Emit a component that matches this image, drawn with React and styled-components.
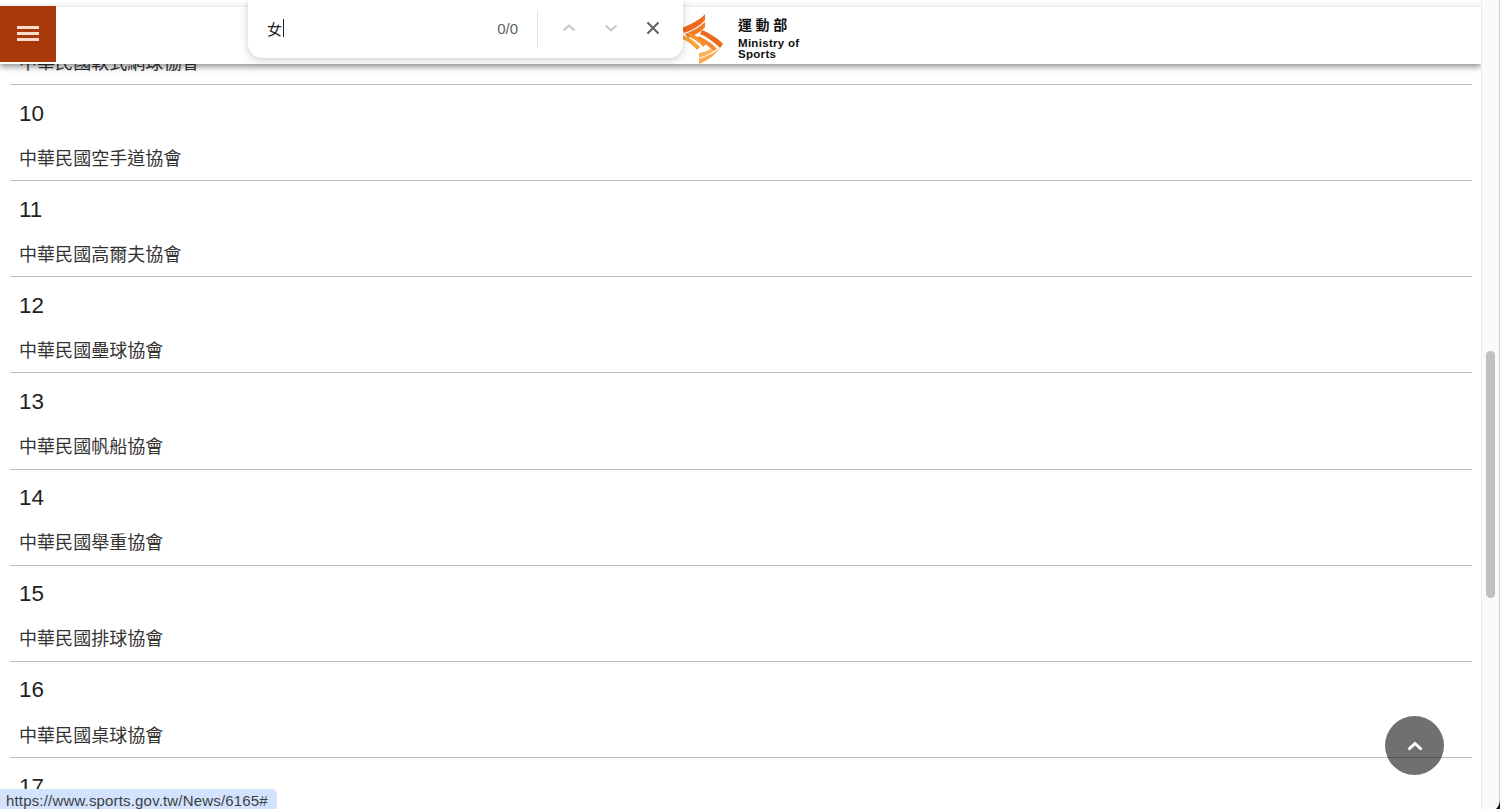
import React from 'react';
import styled, { createGlobalStyle } from 'styled-components';

const GlobalStyle = createGlobalStyle`
  html, body {
    margin: 0;
    height: 100%;
    overflow: hidden;
    background: #fff;
  }
  body {
    font-family: "Liberation Sans", "Noto Sans CJK TC", sans-serif;
  }
`;

const Window = styled.div`
  position: relative;
  display: flex;
  width: 1500px;
  height: 809px;
  overflow: hidden;
  background: #fff;
`;

const Page = styled.main`
  position: relative;
  flex: 1;
  min-width: 0;
  overflow: hidden;
`;

const TopStrip = styled.div`
  position: absolute;
  top: 0;
  left: 0;
  right: 0;
  z-index: 2;
  height: 6px;
  background: #fff;
`;

const Header = styled.header`
  position: absolute;
  top: 6px;
  left: 0;
  right: 0;
  z-index: 2;
  display: flex;
  height: 58px;
  background: #fff;
  border-top: 1px solid #efefef;
  box-sizing: border-box;
  box-shadow: 0 3px 6px rgba(0, 0, 0, 0.42);
`;

const MenuButton = styled.button`
  display: flex;
  flex-direction: column;
  justify-content: center;
  gap: 3px;
  box-sizing: border-box;
  width: 56px;
  height: 56px;
  margin-top: -1px;
  padding: 0 17px 1px;
  border: 0;
  background: #a9380a;
`;

const MenuBar = styled.span`
  display: block;
  height: 3px;
  background: #fbdccb;
`;

const Logo = styled.div`
  display: flex;
  align-items: flex-start;
  gap: 15px;
  margin-left: 626px;
  padding-top: 7px;
`;

const LogoText = styled.div`
  display: flex;
  flex-direction: column;
  color: #111;
`;

const LogoTitle = styled.span`
  font-size: 14px;
  font-weight: 700;
  line-height: 20px;
  letter-spacing: 3.6px;
  margin: 1px 0 2.5px;
`;

const LogoSub = styled.span`
  font-size: 11.5px;
  font-weight: 700;
  line-height: 11.5px;
  letter-spacing: 0.3px;
`;

const List = styled.div`
  display: flex;
  flex-direction: column;
  margin: -11.14px 9px 0 9.5px;
`;

const Row = styled.div`
  box-sizing: border-box;
  flex: none;
  height: 96.14px;
  padding: 15.7px 9.5px 0;
  border-bottom: 1px solid #bcbcbc;
`;

const RowNumber = styled.div`
  font-size: 22.4px;
  line-height: 26px;
  color: #222;
`;

const RowName = styled.div`
  margin-top: 19.1px;
  font-size: 18px;
  line-height: 26px;
  letter-spacing: 0.05px;
  color: #333;
`;

const Scrollbar = styled.div`
  flex: none;
  box-sizing: border-box;
  width: 19px;
  padding: 351px 4px 0 4px;
  background: #fafafa;
  border-left: 1px solid #ebebeb;
  border-right: 1px solid #cfcfcf;
`;

const Thumb = styled.div`
  height: 247px;
  border-radius: 5px;
  background: #c0c0c0;
`;

const FindBar = styled.div`
  position: absolute;
  top: 0;
  left: 248px;
  z-index: 3;
  display: flex;
  align-items: center;
  box-sizing: border-box;
  width: 435px;
  height: 58px;
  padding: 0 9px 2px 19px;
  background: #fff;
  border-radius: 0 0 14px 14px;
  box-shadow: 0 2px 8px rgba(0, 0, 0, 0.2);
`;

const FindInput = styled.div`
  flex: 1;
  display: flex;
  align-items: center;
  font-size: 15px;
  color: #222;
`;

const Caret = styled.span`
  width: 1px;
  height: 18px;
  margin-left: 1px;
  background: #222;
`;

const FindCount = styled.span`
  font-size: 15px;
  color: #5f6368;
`;

const FindDivider = styled.span`
  width: 1px;
  height: 37px;
  margin: 0 10px 0 19px;
  background: #e3e4ea;
`;

const FindAction = styled.span`
  display: flex;
  align-items: center;
  justify-content: center;
  width: 42px;
  height: 42px;
  color: ${props => props.$dim ? '#c4c6c9' : '#5f6368'};
`;

const TopButton = styled.button`
  position: absolute;
  right: 56px;
  bottom: 34px;
  z-index: 3;
  display: flex;
  align-items: center;
  justify-content: center;
  width: 59px;
  height: 59px;
  padding: 0;
  border: 0;
  border-radius: 50%;
  background: rgba(0, 0, 0, 0.56);
`;

const StatusBubble = styled.div`
  position: absolute;
  left: 0;
  bottom: 0;
  z-index: 4;
  box-sizing: border-box;
  width: 277px;
  height: 20px;
  padding-left: 6px;
  border-radius: 0 5px 0 0;
  background: #d3e3fd;
  color: #3c4043;
  font-size: 15px;
  line-height: 23px;
  letter-spacing: 0.17px;
  white-space: nowrap;
`;

const Corner = styled.div`
  position: absolute;
  right: 0;
  bottom: 0;
  z-index: 4;
  width: 4px;
  height: 9px;
  background: #111;
  clip-path: path('M4 0 L4 9 L0 9 Q3.4 6 4 0 Z');
`;

const rows = [
  { id: 9, name: '中華民國軟式網球協會' },
  { id: 10, name: '中華民國空手道協會' },
  { id: 11, name: '中華民國高爾夫協會' },
  { id: 12, name: '中華民國壘球協會' },
  { id: 13, name: '中華民國帆船協會' },
  { id: 14, name: '中華民國舉重協會' },
  { id: 15, name: '中華民國排球協會' },
  { id: 16, name: '中華民國桌球協會' },
  { id: 17 },
];

const Chevron = ({ up }) => (
  <svg width="18" height="18" viewBox="0 0 18 18" fill="none" stroke="currentColor" strokeWidth="2">
    <path d={up ? 'M3.5 11.5 L9 6.5 L14.5 11.5' : 'M3.5 6.5 L9 11.5 L14.5 6.5'} />
  </svg>
);

const LogoMark = () => (
  <svg width="41" height="50" viewBox="0 0 41 50">
    <path d="M23 0 C18 6 9 10 0 14 L2 19 C11 16 19 11 23 6 Z" fill="#ee6a1f" />
    <path d="M23 8 C18 13 11 17 3 20 L6 24 C13 21 20 17 23 13 Z" fill="#f27a25" />
    <path d="M0 21 C6 23 13 27 18 33 L15 36 C11 31 6 27 0 25 Z" fill="#f7a03c" />
    <path d="M5 19 L9 24 C14 26 19 30 21 33 L24 30 C19 25 13 21 9 19 Z" fill="#f6922f" />
    <path d="M20 16 C27 19 36 24 41 30 L38 34 C32 28 25 23 18 20 Z" fill="#ee6a1f" />
    <path d="M17 22 C23 25 30 29 35 35 L31 37 C27 32 21 28 15 25 Z" fill="#f48a2c" />
    <path d="M41 30 C36 39 27 46 17 50 L17 45 C26 42 34 38 38 34 Z" fill="#f9a94a" />
    <path d="M32 37 C28 40 22 42 17 44 L17 39 C22 38 26 37 28 35 Z" fill="#fbb45a" />
  </svg>
);

const App = () => (
  <Window>
    <GlobalStyle />
    <Page>
      <TopStrip />
      <Header>
        <MenuButton aria-label="menu">
          <MenuBar />
          <MenuBar />
          <MenuBar />
        </MenuButton>
        <Logo>
          <LogoMark />
          <LogoText>
            <LogoTitle>運動部</LogoTitle>
            <LogoSub>Ministry of</LogoSub>
            <LogoSub>Sports</LogoSub>
          </LogoText>
        </Logo>
      </Header>
      <List>
        {rows.map(row => (
          <Row key={row.id}>
            <RowNumber>{row.id}</RowNumber>
            {row.name && <RowName>{row.name}</RowName>}
          </Row>
        ))}
      </List>
    </Page>
    <Scrollbar>
      <Thumb />
    </Scrollbar>
    <FindBar>
      <FindInput>女<Caret /></FindInput>
      <FindCount>0/0</FindCount>
      <FindDivider />
      <FindAction $dim><Chevron up /></FindAction>
      <FindAction $dim><Chevron /></FindAction>
      <FindAction>
        <svg width="18" height="18" viewBox="0 0 18 18" fill="none" stroke="currentColor" strokeWidth="2">
          <path d="M3.5 3.5 L14.5 14.5 M14.5 3.5 L3.5 14.5" />
        </svg>
      </FindAction>
    </FindBar>
    <TopButton aria-label="top">
      <svg width="20" height="20" viewBox="0 0 20 20" fill="none" stroke="#fff" strokeWidth="3">
        <path d="M3.5 13.5 L10 7.5 L16.5 13.5" />
      </svg>
    </TopButton>
    <StatusBubble>https://www.sports.gov.tw/News/6165#</StatusBubble>
    <Corner />
  </Window>
);

export default App;
